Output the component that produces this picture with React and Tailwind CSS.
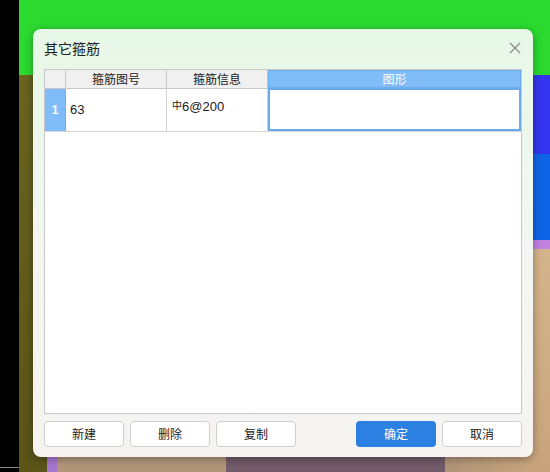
import React from 'react';

const cjk = { fontFamily: '"Noto Sans CJK SC", "Noto Sans", sans-serif' };

const Button = ({ children, primary }) => (
    <button
        className={
            primary
                ? 'w-[80px] h-[26px] rounded-[4px] bg-[#2c80e2] text-white text-[12px]'
                : 'w-[80px] h-[26px] rounded-[4px] bg-white border border-[#cfcfcf] text-[#222] text-[12px]'
        }
    >
        {children}
    </button>
);

const App = () => {
    return (
        <div className="relative w-[550px] h-[472px] overflow-hidden bg-black" style={cjk}>
            {/* desktop windows behind the dialog */}
            <div className="absolute left-[19px] top-0 right-0 h-[75px] bg-[#2bd92f]" />
            <div className="absolute left-[19px] top-[75px] w-[80px] bottom-0 bg-gradient-to-b from-[#6a6420] to-[#5a5418]" />
            <div className="absolute left-0 top-[467px] w-[19px] h-[1px] bg-[#888]" />
            <div className="absolute left-[99px] top-[75px] right-0 bottom-0 bg-[#b09478]" />
            <div className="absolute left-[533px] top-[75px] right-0 h-[79px] bg-[#3434ee]" />
            <div className="absolute left-[533px] top-[154px] right-0 h-[86px] bg-[#0f63e6]" />
            <div className="absolute left-[533px] top-[240px] right-0 h-[9px] bg-[#c282e0]" />
            <div className="absolute left-[533px] top-[249px] right-0 bottom-0 bg-gradient-to-b from-[#d4b48c] to-[#c8a47c]" />
            <div className="absolute left-[47px] top-[440px] w-[10px] bottom-0 bg-[#a676d0]" />
            <div className="absolute left-[57px] top-[440px] w-[169px] bottom-0 bg-[#b2967a]" />
            <div className="absolute left-[226px] top-[440px] w-[219px] bottom-0 bg-[#735b69]" />
            <div className="absolute left-[445px] top-[440px] w-[88px] bottom-0 bg-gradient-to-r from-[#b09478] to-[#c8a47c]" />

            {/* dialog */}
            <div className="absolute left-[33px] top-[29px] w-[500px] h-[428px] rounded-[8px] bg-gradient-to-b from-[#e7f8e7] via-[#f3f6f2] to-[#f6f3f1] shadow-[0_2px_8px_rgba(0,0,0,0.35)] flex flex-col px-[11px]">
                <div className="h-[40px] flex items-center justify-between pb-[3px]">
                    <span className="text-[14px] text-[#222] leading-none">其它箍筋</span>
                    <svg width="12" height="12" viewBox="0 0 12 12" className="mr-[1px]">
                        <path d="M1 1L11 11M11 1L1 11" stroke="#8a8a8a" strokeWidth="1.2" />
                    </svg>
                </div>

                <div className="h-[345px] bg-white border border-[#c8c8c8] flex flex-col text-[12px] text-[#222]">
                    <div className="flex h-[19px] bg-[#f0f0f0] border-b border-[#c8c8c8]">
                        <div className="w-[21px] border-r border-[#c8c8c8]" />
                        <div className="w-[101px] border-r border-[#c8c8c8] flex items-center justify-center">箍筋图号</div>
                        <div className="w-[101px] border-r border-[#c8c8c8] flex items-center justify-center">箍筋信息</div>
                        <div className="flex-1 bg-[#80bcf8] border border-[#6eaeee] flex items-center justify-center text-white">图形</div>
                    </div>
                    <div className="flex h-[43px] border-b border-[#d4d4d4]">
                        <div className="w-[21px] bg-[#80bcf8] border-r border-[#6eaeee] flex items-center justify-center text-white font-bold" style={{ fontFamily: '"Liberation Sans", sans-serif' }}>1</div>
                        <div className="w-[101px] border-r border-[#d4d4d4] flex items-center pl-[4px] text-[13px]" style={{ fontFamily: '"Liberation Sans", sans-serif' }}>63</div>
                        <div className="w-[101px] border-r border-[#d4d4d4] flex items-start pt-[9px] pl-[5px] text-[13px]" style={{ fontFamily: '"Liberation Sans", sans-serif' }}>
                            <span className="text-[10px] leading-[14px]" style={cjk}>中</span>
                            <span className="leading-[18px]">6@200</span>
                        </div>
                        <div className="flex-1 border-2 border-[#6aaaea] -mt-[1px]" />
                    </div>
                </div>

                <div className="flex items-center mt-[7px] gap-[6px]">
                    <Button>新建</Button>
                    <Button>删除</Button>
                    <Button>复制</Button>
                    <div className="flex-1" />
                    <Button primary>确定</Button>
                    <Button>取消</Button>
                </div>
            </div>
        </div>
    );
};

export default App;
